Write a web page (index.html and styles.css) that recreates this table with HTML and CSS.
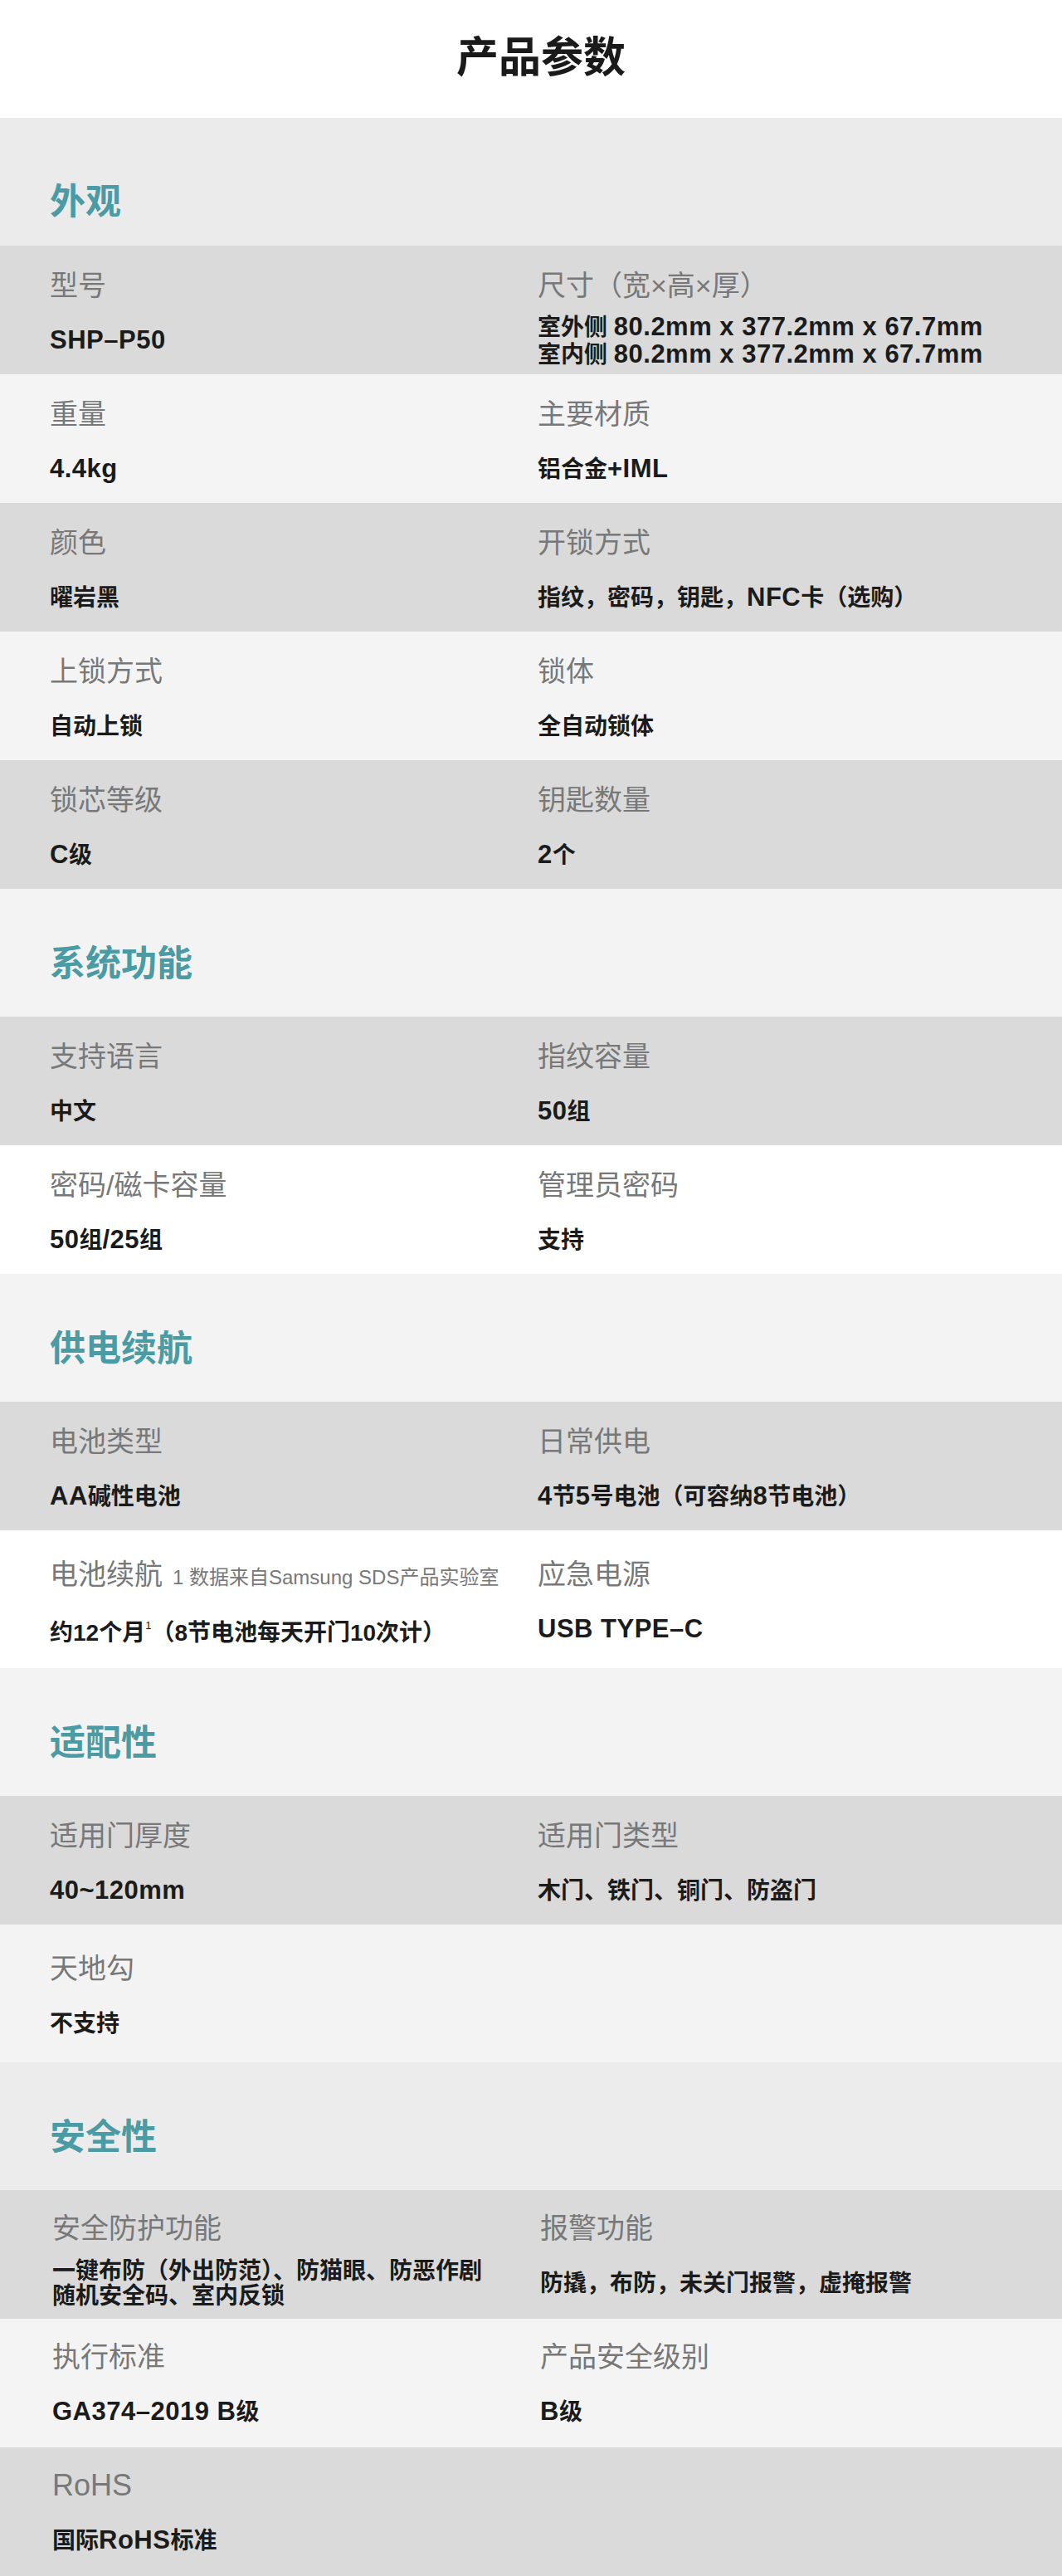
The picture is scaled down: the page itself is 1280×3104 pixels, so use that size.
FILE: index.html
```html
<!DOCTYPE html>
<html lang="zh-CN">
<head>
<meta charset="utf-8">
<title>产品参数</title>
<link rel="stylesheet" href="styles.css">
</head>
<body>
<main class="specs">
  <h1 class="page-title">产品参数</h1>

  <section class="group">
    <div class="group-head group-head--first"><h2 class="group-title">外观</h2></div>
    <div class="row row--dark">
      <div class="cell"><div class="label">型号</div><div class="value"><p><span class="en">SHP–P50</span></p></div></div>
      <div class="cell"><div class="label">尺寸（宽×高×厚）</div><div class="value"><p>室外侧 <span class="en">80.2mm x 377.2mm x 67.7mm</span><br>室内侧 <span class="en">80.2mm x 377.2mm x 67.7mm</span></p></div></div>
    </div>
    <div class="row row--light">
      <div class="cell"><div class="label">重量</div><div class="value"><p><span class="en">4.4kg</span></p></div></div>
      <div class="cell"><div class="label">主要材质</div><div class="value"><p>铝合金<span class="en">+IML</span></p></div></div>
    </div>
    <div class="row row--dark">
      <div class="cell"><div class="label">颜色</div><div class="value"><p>曜岩黑</p></div></div>
      <div class="cell"><div class="label">开锁方式</div><div class="value"><p>指纹，密码，钥匙，<span class="en">NFC</span>卡（选购）</p></div></div>
    </div>
    <div class="row row--light">
      <div class="cell"><div class="label">上锁方式</div><div class="value"><p>自动上锁</p></div></div>
      <div class="cell"><div class="label">锁体</div><div class="value"><p>全自动锁体</p></div></div>
    </div>
    <div class="row row--dark">
      <div class="cell"><div class="label">锁芯等级</div><div class="value"><p><span class="en">C</span>级</p></div></div>
      <div class="cell"><div class="label">钥匙数量</div><div class="value"><p><span class="en">2</span>个</p></div></div>
    </div>
  </section>

  <section class="group">
    <div class="group-head"><h2 class="group-title">系统功能</h2></div>
    <div class="row row--dark">
      <div class="cell"><div class="label">支持语言</div><div class="value"><p>中文</p></div></div>
      <div class="cell"><div class="label">指纹容量</div><div class="value"><p><span class="en">50</span>组</p></div></div>
    </div>
    <div class="row row--white">
      <div class="cell"><div class="label">密码/磁卡容量</div><div class="value"><p><span class="en">50</span>组<span class="en">/25</span>组</p></div></div>
      <div class="cell"><div class="label">管理员密码</div><div class="value"><p>支持</p></div></div>
    </div>
  </section>

  <section class="group">
    <div class="group-head"><h2 class="group-title">供电续航</h2></div>
    <div class="row row--dark">
      <div class="cell"><div class="label">电池类型</div><div class="value"><p><span class="en">AA</span>碱性电池</p></div></div>
      <div class="cell"><div class="label">日常供电</div><div class="value"><p><span class="en">4</span>节<span class="en">5</span>号电池（可容纳<span class="en">8</span>节电池）</p></div></div>
    </div>
    <div class="row row--white row--tall">
      <div class="cell"><div class="label">电池续航<span class="note">1 数据来自Samsung SDS产品实验室</span></div><div class="value"><p>约12个月<sup class="fn">1</sup>（8节电池每天开门10次计）</p></div></div>
      <div class="cell"><div class="label">应急电源</div><div class="value"><p><span class="en">USB TYPE–C</span></p></div></div>
    </div>
  </section>

  <section class="group">
    <div class="group-head"><h2 class="group-title">适配性</h2></div>
    <div class="row row--dark">
      <div class="cell"><div class="label">适用门厚度</div><div class="value"><p><span class="en">40~120mm</span></p></div></div>
      <div class="cell"><div class="label">适用门类型</div><div class="value"><p>木门、铁门、铜门、防盗门</p></div></div>
    </div>
    <div class="row row--pale row--tall">
      <div class="cell"><div class="label">天地勾</div><div class="value"><p>不支持</p></div></div>
    </div>
  </section>

  <section class="group group--last">
    <div class="group-head group-head--last"><h2 class="group-title">安全性</h2></div>
    <div class="row row--dark">
      <div class="cell"><div class="label">安全防护功能</div><div class="value"><p class="tight">一键布防（外出防范）、防猫眼、防恶作剧<br>随机安全码、室内反锁</p></div></div>
      <div class="cell"><div class="label">报警功能</div><div class="value"><p>防撬，布防，未关门报警，虚掩报警</p></div></div>
    </div>
    <div class="row row--light">
      <div class="cell"><div class="label">执行标准</div><div class="value"><p><span class="en">GA374–2019 B</span>级</p></div></div>
      <div class="cell"><div class="label">产品安全级别</div><div class="value"><p><span class="en">B</span>级</p></div></div>
    </div>
    <div class="row row--dark">
      <div class="cell"><div class="label"><span class="en-label">RoHS</span></div><div class="value"><p>国际<span class="en">RoHS</span>标准</p></div></div>
    </div>
  </section>
</main>
</body>
</html>
```

FILE: styles.css
```css
* {
  box-sizing: border-box;
  margin: 0;
  padding: 0;
}

html,
body {
  background: #ffffff;
}

body {
  width: 1280px;
  font-family: "Liberation Sans", "Noto Sans CJK SC", sans-serif;
  color: #1b1b1b;
}

.specs {
  display: flex;
  flex-direction: column;
}

.page-title {
  height: 142px;
  display: flex;
  align-items: center;
  justify-content: center;
  padding: 0 0 4px 24px;
  font-size: 51px;
  line-height: 51px;
  font-weight: 700;
  color: #1a1a1a;
}

.group-head {
  height: 154px;
  padding: 65px 0 0 60px;
  background: #f3f3f3;
}

.group-head--first {
  padding-top: 76px;
  background: #ebebeb;
}

.group-head--last {
  background: #ececec;
}

.group-title {
  font-size: 43px;
  line-height: 50px;
  font-weight: 700;
  color: #4a9ba3;
}

.row {
  height: 155px;
  display: grid;
  grid-template-columns: 588px 1fr;
  padding: 28px 0 0 60px;
}

.group--last .row {
  padding-top: 26px;
  padding-left: 63px;
}

.row--tall {
  height: 166px;
  padding-top: 33px;
}

.row--dark {
  background: #dadada;
}

.row--light {
  background: #f4f4f4;
}

.row--white {
  background: #ffffff;
}

.row--pale {
  background: #f3f3f3;
}

.cell {
  display: flex;
  flex-direction: column;
}

.label {
  font-size: 34px;
  line-height: 40px;
  font-weight: 400;
  color: #787878;
  white-space: nowrap;
}

.en-label {
  font-size: 36px;
}

.note {
  margin-left: 12px;
  font-size: 24px;
}

.value {
  margin-top: 6px;
  height: 81px;
  display: flex;
  align-items: center;
}

.value p {
  font-size: 28px;
  line-height: 32px;
  font-weight: 700;
  color: #1b1b1b;
  white-space: nowrap;
}

.value p.tight {
  line-height: 30px;
}

.en {
  font-size: 31px;
  letter-spacing: 0.5px;
}

.fn {
  font-size: 13px;
  line-height: 0;
  font-weight: 400;
  vertical-align: 14px;
}
```
